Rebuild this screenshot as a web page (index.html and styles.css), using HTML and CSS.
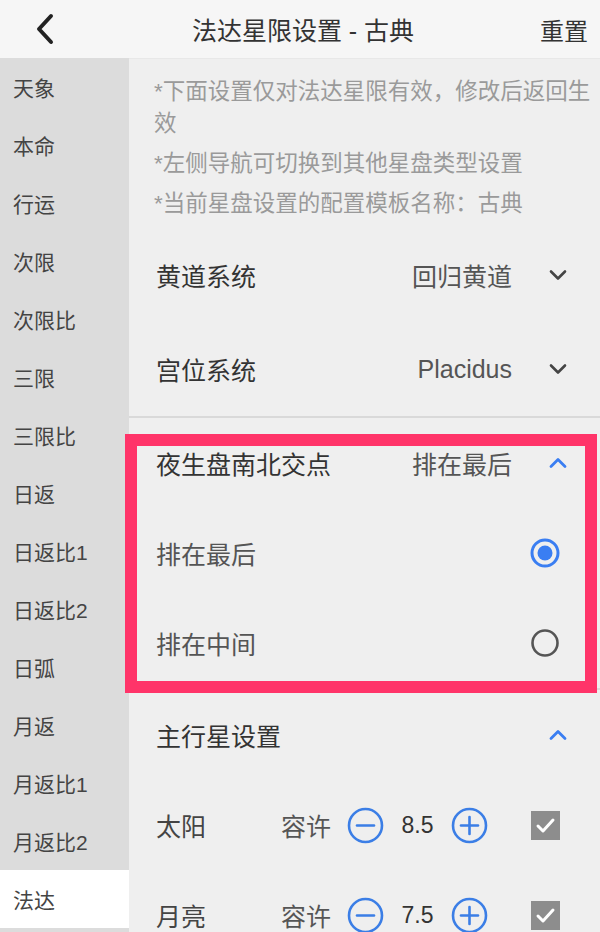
FILE: index.html
```html
<!DOCTYPE html>
<html lang="zh">
<head>
<meta charset="utf-8">
<title>法达星限设置</title>
<link rel="stylesheet" href="styles.css">
</head>
<body>
<div class="app">
  <header class="topbar">
    <div class="back">
      <svg width="22" height="32" viewBox="0 0 22 32"><polyline points="17,3 5,16 17,29" fill="none" stroke="#222" stroke-width="4" stroke-linecap="round" stroke-linejoin="round"/></svg>
    </div>
    <div class="title">法达星限设置 - 古典</div>
    <div class="reset">重置</div>
  </header>
  <div class="body">
    <nav class="side">
      <div class="nav-item">天象</div>
      <div class="nav-item">本命</div>
      <div class="nav-item">行运</div>
      <div class="nav-item">次限</div>
      <div class="nav-item">次限比</div>
      <div class="nav-item">三限</div>
      <div class="nav-item">三限比</div>
      <div class="nav-item">日返</div>
      <div class="nav-item">日返比1</div>
      <div class="nav-item">日返比2</div>
      <div class="nav-item">日弧</div>
      <div class="nav-item">月返</div>
      <div class="nav-item">月返比1</div>
      <div class="nav-item">月返比2</div>
      <div class="nav-item active">法达</div>
    </nav>
    <main class="main">
      <div class="notes">
        <p>*下面设置仅对法达星限有效，修改后返回生效</p>
        <p>*左侧导航可切换到其他星盘类型设置</p>
        <p>*当前星盘设置的配置模板名称：古典</p>
      </div>
      <section class="section">
        <div class="row tall">
          <span class="label">黄道系统</span>
          <span class="value">回归黄道</span>
          <svg class="chev" width="20" height="12" viewBox="0 0 20 12"><polyline points="3,2.5 10,9.5 17,2.5" fill="none" stroke="#444" stroke-width="2.6" stroke-linecap="round" stroke-linejoin="round"/></svg>
        </div>
        <div class="row tall">
          <span class="label">宫位系统</span>
          <span class="value">Placidus</span>
          <svg class="chev" width="20" height="12" viewBox="0 0 20 12"><polyline points="3,2.5 10,9.5 17,2.5" fill="none" stroke="#444" stroke-width="2.6" stroke-linecap="round" stroke-linejoin="round"/></svg>
        </div>
      </section>
      <section class="section">
        <div class="row">
          <span class="label">夜生盘南北交点</span>
          <span class="value">排在最后</span>
          <svg class="chev" width="20" height="12" viewBox="0 0 20 12"><polyline points="3,9.5 10,2.5 17,9.5" fill="none" stroke="#3a7ef2" stroke-width="2.8" stroke-linecap="round" stroke-linejoin="round"/></svg>
        </div>
        <div class="row">
          <span class="label opt">排在最后</span>
          <svg class="radio" width="32" height="32" viewBox="0 0 32 32"><circle cx="16" cy="16" r="13" fill="none" stroke="#3a7ef2" stroke-width="3"/><circle cx="16" cy="16" r="7.5" fill="#3a7ef2"/></svg>
        </div>
        <div class="row">
          <span class="label opt">排在中间</span>
          <svg class="radio" width="32" height="32" viewBox="0 0 32 32"><circle cx="16" cy="16" r="12.5" fill="none" stroke="#555" stroke-width="2.6"/></svg>
        </div>
      </section>
      <section class="section">
        <div class="row">
          <span class="label">主行星设置</span>
          <svg class="chev push" width="20" height="12" viewBox="0 0 20 12"><polyline points="3,9.5 10,2.5 17,9.5" fill="none" stroke="#3a7ef2" stroke-width="2.8" stroke-linecap="round" stroke-linejoin="round"/></svg>
        </div>
        <div class="row">
          <span class="label planet">太阳</span>
          <span class="tol">容许</span>
          <svg class="step" width="37" height="37" viewBox="0 0 37 37"><circle cx="18.5" cy="18.5" r="16.5" fill="none" stroke="#3b7ee6" stroke-width="2.6"/><line x1="10" y1="18.5" x2="27" y2="18.5" stroke="#3b7ee6" stroke-width="2.6" stroke-linecap="round"/></svg>
          <span class="num">8.5</span>
          <svg class="step" width="37" height="37" viewBox="0 0 37 37"><circle cx="18.5" cy="18.5" r="16.5" fill="none" stroke="#3b7ee6" stroke-width="2.6"/><line x1="10" y1="18.5" x2="27" y2="18.5" stroke="#3b7ee6" stroke-width="2.6" stroke-linecap="round"/><line x1="18.5" y1="10" x2="18.5" y2="27" stroke="#3b7ee6" stroke-width="2.6" stroke-linecap="round"/></svg>
          <span class="check"><svg width="29" height="29" viewBox="0 0 29 29"><polyline points="7,15 12,20 22,9" fill="none" stroke="#fff" stroke-width="3" stroke-linecap="round" stroke-linejoin="round"/></svg></span>
        </div>
        <div class="row">
          <span class="label planet">月亮</span>
          <span class="tol">容许</span>
          <svg class="step" width="37" height="37" viewBox="0 0 37 37"><circle cx="18.5" cy="18.5" r="16.5" fill="none" stroke="#3b7ee6" stroke-width="2.6"/><line x1="10" y1="18.5" x2="27" y2="18.5" stroke="#3b7ee6" stroke-width="2.6" stroke-linecap="round"/></svg>
          <span class="num">7.5</span>
          <svg class="step" width="37" height="37" viewBox="0 0 37 37"><circle cx="18.5" cy="18.5" r="16.5" fill="none" stroke="#3b7ee6" stroke-width="2.6"/><line x1="10" y1="18.5" x2="27" y2="18.5" stroke="#3b7ee6" stroke-width="2.6" stroke-linecap="round"/><line x1="18.5" y1="10" x2="18.5" y2="27" stroke="#3b7ee6" stroke-width="2.6" stroke-linecap="round"/></svg>
          <span class="check"><svg width="29" height="29" viewBox="0 0 29 29"><polyline points="7,15 12,20 22,9" fill="none" stroke="#fff" stroke-width="3" stroke-linecap="round" stroke-linejoin="round"/></svg></span>
        </div>
      </section>
    </main>
  </div>
  <div class="highlight"></div>
</div>
</body>
</html>
```
FILE: styles.css
```css
* { box-sizing: border-box; }
html, body {
  margin: 0;
  padding: 0;
  width: 600px;
  height: 932px;
  overflow: hidden;
}
body {
  font-family: "Liberation Sans", "Noto Sans CJK SC", sans-serif;
  color: #333;
  background: #efefef;
}
.app {
  position: relative;
  width: 600px;
  height: 932px;
  display: flex;
  flex-direction: column;
}
.topbar {
  height: 58px;
  flex: none;
  background: #f6f6f6;
  display: flex;
  align-items: center;
  padding: 0 12px 0 34px;
}
.back { width: 22px; height: 32px; display: flex; }
.title {
  flex: 1;
  text-align: center;
  font-size: 25px;
  color: #333;
  padding-left: 10px;
}
.reset { font-size: 24px; color: #333; }
.body {
  flex: 1;
  display: flex;
  min-height: 0;
}
.side {
  width: 129px;
  flex: none;
  background: #dcdcdc;
  display: flex;
  flex-direction: column;
}
.nav-item {
  height: 58px;
  flex: none;
  display: flex;
  align-items: center;
  padding-left: 13px;
  font-size: 21px;
  color: #444;
}
.nav-item.active { background: #fff; }
.main {
  flex: 1;
  background: #efefef;
  border-top: 1px solid #e8e8e8;
}
.notes {
  padding: 17px 3px 8px 25px;
  color: #9a9a9a;
  font-size: 22.5px;
}
.notes p {
  margin: 0 0 8px;
  line-height: 32px;
}
.notes p:last-child { margin-bottom: 0; }
.section { border-bottom: 2px solid #d9d9d9; }
.row {
  height: 90px;
  display: flex;
  align-items: center;
  padding: 0 32px 0 27px;
}
.row.tall { height: 94px; }
.label {
  font-size: 25px;
  color: #333;
  flex: 1;
}
.label.opt { color: #555; }
.value {
  font-size: 25px;
  color: #555;
  margin-right: 36px;
}
.chev { flex: none; }
.radio { flex: none; margin-right: 7px; }
.label.planet { flex: none; width: 125px; color: #444; }
.tol { font-size: 25px; color: #555; width: 66px; }
.step { flex: none; }
.num {
  width: 67px;
  text-align: center;
  font-size: 23px;
  color: #333;
}
.check {
  margin-left: auto;
  margin-right: 8px;
  width: 29px;
  height: 29px;
  background: #8d8d8d;
  display: flex;
}
.highlight {
  position: absolute;
  left: 125px;
  top: 434px;
  width: 472px;
  height: 259px;
  border: 12px solid #ff3469;
  pointer-events: none;
}
```
